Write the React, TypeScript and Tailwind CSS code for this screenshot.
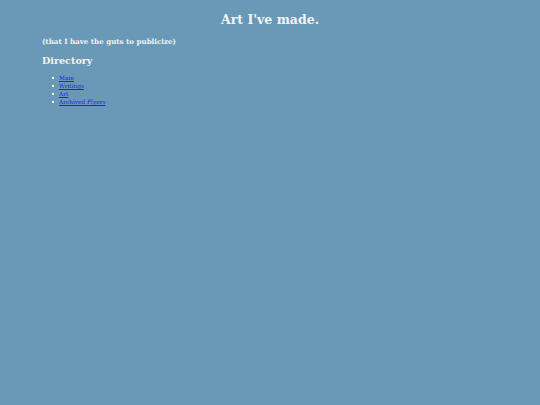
const links = ["Main", "Writings", "Art", "Archived Flyers"];

export default function App() {
  return (
    <div className="min-h-[405px] w-full bg-[#6999b6] font-['DejaVu_Serif',serif] text-[#f4f4f4]">
      <h1 className="pt-[12px] text-center text-[12.5px] font-bold leading-[16px]">Art I've made.</h1>
      <div className="px-[42px]">
        <h4 className="mt-[9px] text-[7.1px] font-bold leading-[10px]">(that I have the guts to publicize)</h4>
        <h2 className="mt-[8px] text-[9.6px] font-bold leading-[12px]">Directory</h2>
        <ul className="mt-[7px] pl-[17px] text-[5.8px] leading-[8px]">
          {links.map((l) => (
            <li key={l} className="flex items-center">
              <span className="-ml-[7px] mr-[5px] h-[2px] w-[2px] bg-[#f4f4f4]" />
              <a href="#" className="text-[#2222e6] underline">
                {l}
              </a>
            </li>
          ))}
        </ul>
      </div>
    </div>
  );
}
